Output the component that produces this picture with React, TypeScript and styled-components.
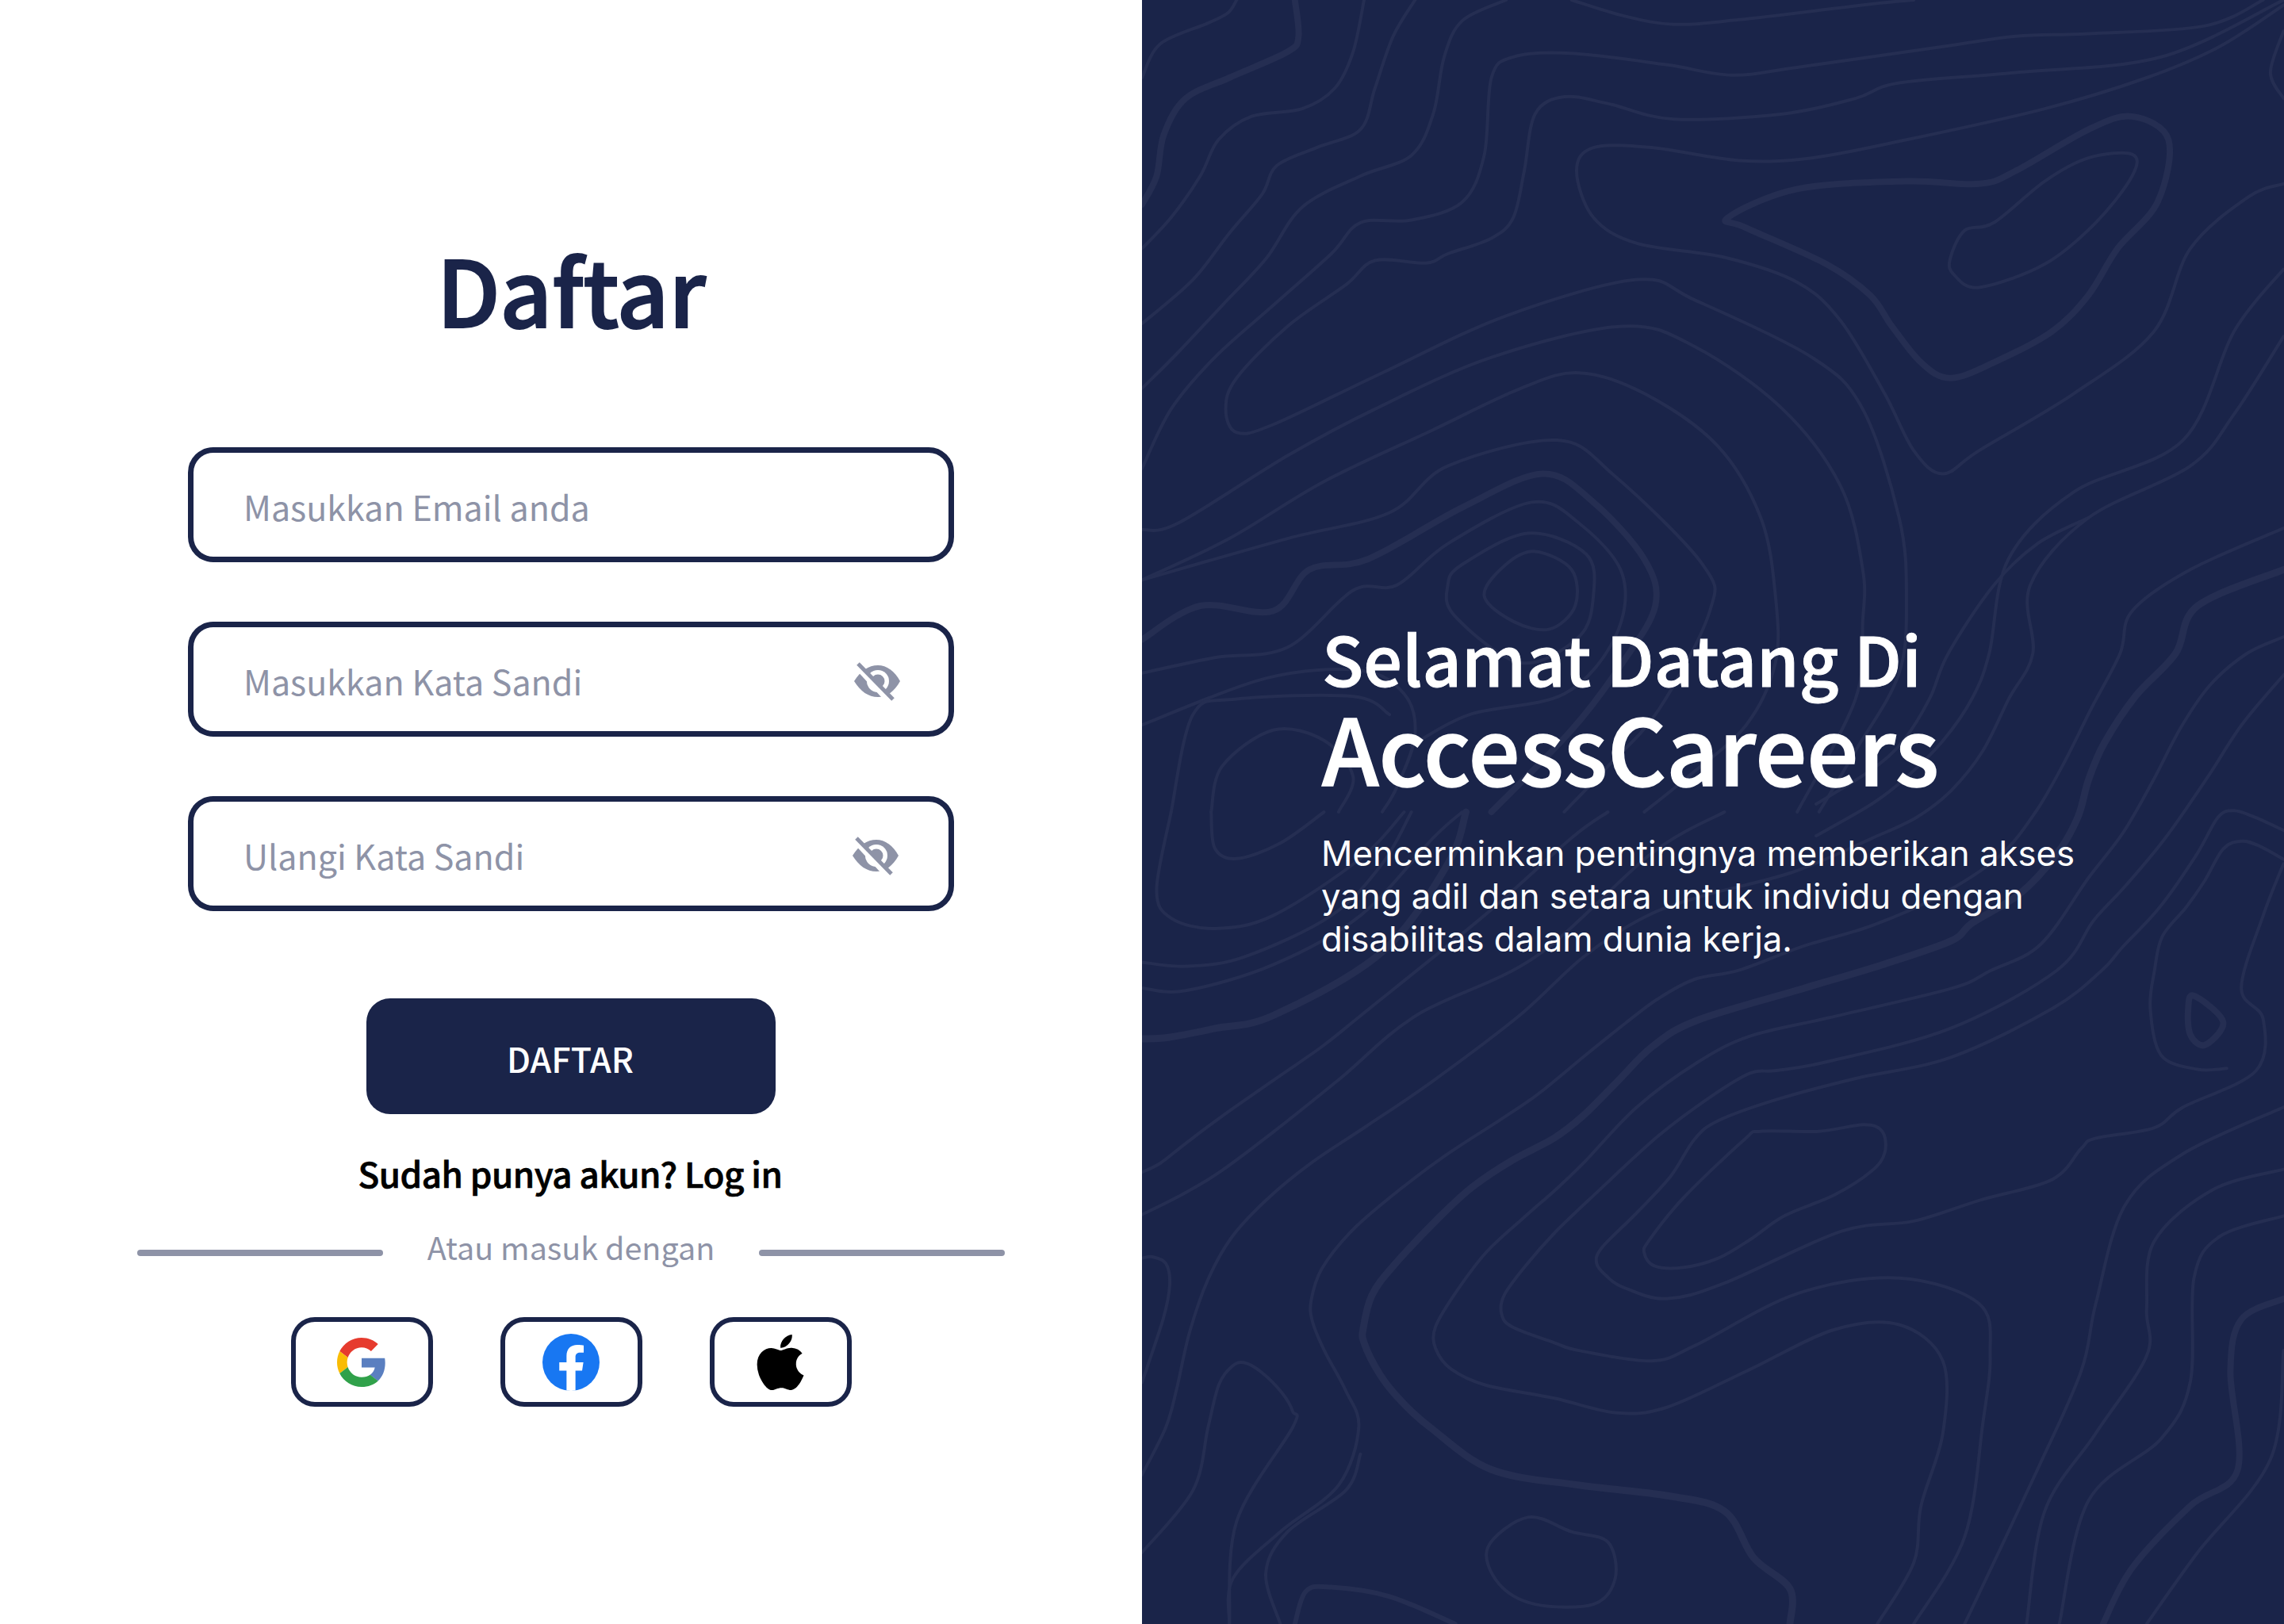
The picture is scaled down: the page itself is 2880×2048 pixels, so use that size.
import React from "react";
import styled, { createGlobalStyle } from "styled-components";
import { FaApple } from "react-icons/fa";

const NAVY = "#1A2449";
const GREY = "#8E93A7";
const SANS = `"Noto Sans CJK JP", "Noto Sans", sans-serif`;

const GlobalStyle = createGlobalStyle`
  html, body {
    margin: 0;
    padding: 0;
    background: #fff;
  }
`;

const Page = styled.div`
  display: grid;
  grid-template-columns: 1440px 1440px;
  width: 2880px;
  height: 2048px;
  overflow: hidden;
`;

const FormPanel = styled.main`
  display: flex;
  flex-direction: column;
  align-items: center;
  padding-top: 303px;
  background: #fff;
  font-family: ${SANS};
`;

const Title = styled.h1`
  margin: 0 0 141px;
  font-size: 115px;
  line-height: 120px;
  font-weight: 500;
  letter-spacing: -0.5px;
  -webkit-text-stroke: 2px ${NAVY};
  color: ${NAVY};
`;

const Fields = styled.div`
  display: flex;
  flex-direction: column;
  gap: 75px;
`;

const Field = styled.label`
  display: flex;
  align-items: center;
  box-sizing: border-box;
  width: 966px;
  height: 145px;
  padding: 0 0 0 63px;
  border: 7px solid ${NAVY};
  border-radius: 32px;
  background: #fff;
`;

const FieldInput = styled.input`
  flex: 1;
  min-width: 0;
  padding: 3px 0 0;
  border: 0;
  outline: 0;
  background: transparent;
  font-family: ${SANS};
  font-size: 43px;
  color: ${NAVY};

  &::placeholder {
    color: ${GREY};
    opacity: 1;
  }
`;

const EyeSlot = styled.span<{ $right: number }>`
  display: flex;
  margin: 6px ${({ $right }) => $right}px 0 0;
`;

const SubmitButton = styled.button`
  width: 516px;
  height: 146px;
  margin-top: 110px;
  padding: 3px 2px 0 0;
  border: 0;
  border-radius: 30px;
  background: ${NAVY};
  color: #fff;
  font-family: ${SANS};
  font-size: 43px;
  font-weight: 500;
`;

const LoginHint = styled.p`
  margin: 44px 2px 0 0;
  font-size: 44px;
  line-height: 60px;
  font-weight: 500;
  letter-spacing: -0.5px;
  -webkit-text-stroke: 0.7px #000;
  color: #000;
`;

const Divider = styled.div`
  display: flex;
  align-items: center;
  justify-content: space-between;
  width: 1094px;
  margin-top: 33px;
  font-size: 39.5px;
  line-height: 60px;
  color: ${GREY};
`;

const DividerLine = styled.span`
  width: 310px;
  height: 8px;
  margin-top: 16px;
  border-radius: 4px;
  background: ${GREY};
`;

const SocialRow = styled.div`
  display: flex;
  gap: 85px;
  margin-top: 59px;
`;

const SocialButton = styled.button`
  display: flex;
  align-items: center;
  justify-content: center;
  box-sizing: border-box;
  width: 179px;
  height: 113px;
  padding: 0;
  border: 6px solid ${NAVY};
  border-radius: 30px;
  background: #fff;
`;

const WelcomePanel = styled.aside`
  position: relative;
  display: flex;
  flex-direction: column;
  padding: 776px 0 0 227px;
  background: ${NAVY};
  overflow: hidden;
`;

const Contours = styled.svg`
  position: absolute;
  inset: 0;
  width: 1440px;
  height: 2048px;
  fill: none;
  stroke: #252E52;
  stroke-linecap: round;
  stroke-linejoin: round;
`;

const Greeting = styled.h2`
  position: relative;
  margin: 0;
  font-family: ${SANS};
  font-size: 86px;
  line-height: 105px;
  font-weight: 500;
  -webkit-text-stroke: 1px #fff;
  color: #fff;
`;

const Brand = styled.h2`
  position: relative;
  margin: 0;
  font-family: ${SANS};
  font-size: 115px;
  line-height: 120px;
  font-weight: 500;
  -webkit-text-stroke: 1.5px #fff;
  color: #fff;
`;

const Blurb = styled.p`
  position: relative;
  width: 1000px;
  margin: 49px 0 0 -1px;
  font-family: Inter, sans-serif;
  font-size: 43.7px;
  line-height: 54px;
  color: #fff;
`;

type Pt = [number, number];

// the contours were traced from crops of different scale, these bring them to panel pixels
const z5 = (pts: Pt[]): Pt[] => pts.map(([x, y]) => [x * 0.918, y * 0.653]);
const z6 = (pts: Pt[]): Pt[] => pts.map(([x, y]) => [x * 0.918, 1024 + y * 0.653]);
const lowerLeft = (pts: Pt[]): Pt[] => pts.map(([x, y]) => [x / 3, 1280 + y / 3]);
const lowerMid = (pts: Pt[]): Pt[] => pts.map(([x, y]) => [500 + x / 3, 1100 + y / 3]);
const rightMid = (pts: Pt[]): Pt[] => pts.map(([x, y]) => [920 + x / 3, 824 + y / 3]);

// catmull-rom through the traced points, so the contours stay round
const smooth = (pts: Pt[], closed = false): string => {
  const n = pts.length;
  const at = (i: number): Pt => (closed ? pts[(i + n) % n] : pts[Math.max(0, Math.min(n - 1, i))]);
  const f = (v: number) => v.toFixed(1);
  let d = `M${f(pts[0][0])} ${f(pts[0][1])}`;
  const segs = closed ? n : n - 1;
  for (let i = 0; i < segs; i++) {
    const [p0, p1, p2, p3] = [at(i - 1), at(i), at(i + 1), at(i + 2)];
    d += `C${f(p1[0] + (p2[0] - p0[0]) / 6)} ${f(p1[1] + (p2[1] - p0[1]) / 6)} ${f(p2[0] - (p3[0] - p1[0]) / 6)} ${f(p2[1] - (p3[1] - p1[1]) / 6)} ${f(p2[0])} ${f(p2[1])}`;
  }
  return closed ? d + "Z" : d;
};

type Contour = { w: number; pts: Pt[]; closed?: boolean };

const contours: Contour[] = [
  // upper half
  { w: 4, pts: z5([[0, 150], [25, 85], [90, 45], [118, 25], [130, 0]]) },
  { w: 8, pts: z5([[210, 0], [215, 70], [200, 100], [120, 150], [60, 190], [30, 260], [20, 340], [0, 395]]) },
  { w: 4, pts: z5([[305, 0], [290, 100], [265, 170], [220, 210], [150, 225], [105, 270], [80, 340], [40, 420], [0, 480]]) },
  { w: 4, pts: z5([[375, 0], [345, 70], [320, 170], [300, 250], [240, 285], [185, 320], [165, 375], [120, 450], [70, 540], [0, 625]]) },
  { w: 4, pts: z5([[500, 0], [440, 40], [415, 110], [400, 220], [370, 300], [300, 340], [220, 400], [170, 500], [110, 590], [50, 680], [0, 750]]) },
  { w: 4, pts: z5([[590, 0], [660, 30], [730, 47], [820, 38], [1000, 8], [1060, 0]]) },
  { w: 4, pts: z5([[1540, 0], [1460, 50], [1300, 65], [1200, 70], [1100, 90], [900, 130], [810, 145], [720, 125], [590, 103], [510, 110], [480, 150], [470, 300], [440, 390], [370, 425], [300, 430], [260, 490], [180, 590], [100, 690], [40, 790], [0, 905]]) },
  { w: 4, pts: z5([[1568, 0], [1400, 110], [1200, 140], [1040, 160], [980, 190], [880, 220], [730, 230], [640, 200], [580, 187], [540, 220], [525, 330], [510, 420], [480, 460], [420, 490], [390, 508], [320, 503], [280, 550], [200, 630], [130, 730], [115, 790], [130, 835], [180, 820], [330, 720], [500, 610], [680, 540], [760, 580], [920, 690], [990, 790], [1040, 1000], [1050, 1150], [1040, 1300], [980, 1450], [930, 1568]]) },
  { w: 4, pts: z5([[1568, 10], [1480, 90], [1380, 150], [1240, 210], [1050, 270], [920, 305], [820, 310], [700, 285], [620, 285], [597, 330], [620, 420], [680, 470], [800, 497], [900, 545], [960, 620], [1020, 760], [1060, 870], [1100, 915], [1150, 870], [1280, 760], [1390, 640], [1440, 480], [1520, 380], [1568, 355]]) },
  { w: 8, closed: true, pts: z5([[805, 420], [900, 365], [1050, 350], [1150, 355], [1200, 330], [1300, 250], [1360, 225], [1410, 270], [1395, 390], [1340, 480], [1300, 570], [1250, 640], [1170, 700], [1110, 730], [1070, 700], [1030, 630], [1000, 570], [940, 510], [830, 440]]) },
  { w: 4, closed: true, pts: z5([[1110, 500], [1130, 445], [1170, 430], [1240, 350], [1300, 305], [1360, 298], [1360, 340], [1310, 430], [1240, 510], [1150, 555], [1115, 530]]) },
  { w: 4, pts: z5([[0, 1023], [50, 1010], [200, 880], [320, 790], [480, 690], [660, 630], [760, 670], [880, 790], [960, 940], [990, 1100], [990, 1200], [980, 1350], [900, 1568]]) },
  { w: 4, pts: z5([[0, 1120], [120, 1040], [250, 930], [400, 830], [520, 750], [600, 720], [690, 760], [790, 860], [850, 1000], [870, 1150], [870, 1280], [830, 1400], [750, 1500], [690, 1568]]) },
  { w: 4, closed: true, pts: z5([[470, 1150], [500, 1090], [540, 1065], [590, 1100], [595, 1170], [560, 1215], [510, 1200]]) },
  { w: 4, closed: true, pts: z5([[420, 1130], [440, 1090], [530, 1030], [610, 1070], [620, 1150], [600, 1230], [520, 1280], [430, 1190]]) },
  { w: 4, pts: z5([[0, 1300], [100, 1270], [200, 1250], [290, 1140], [350, 1130], [420, 1050], [535, 970], [600, 1010], [660, 1110], [650, 1230], [580, 1340], [450, 1380], [370, 1440]]) },
  { w: 8, pts: z5([[0, 1235], [80, 1170], [180, 1180], [230, 1100], [310, 1080], [440, 980], [550, 915], [620, 970], [690, 1080], [705, 1170], [660, 1280], [590, 1410], [480, 1568]]) },
  { w: 4, pts: z5([[0, 1120], [200, 1040], [340, 990], [420, 900], [570, 850], [650, 920], [770, 1090], [780, 1180], [710, 1370], [640, 1480], [580, 1568]]) },
  { w: 4, pts: z5([[0, 1400], [170, 1310], [300, 1295], [360, 1340], [375, 1420], [350, 1520], [330, 1568]]) },
  { w: 4, pts: z5([[40, 1568], [70, 1380], [130, 1350], [290, 1345], [340, 1380]]) },
  { w: 4, pts: z5([[95, 1568], [110, 1480], [180, 1410], [250, 1430], [290, 1500], [270, 1568]]) },
  { w: 4, pts: z5([[1568, 60], [1550, 140], [1568, 190]]) },

  // right side, upper end behind the heading
  { w: 4, pts: [...z5([[1568, 520], [1500, 640], [1430, 850], [1280, 950], [1190, 1080]]), ...rightMid([[445, 0], [380, 170], [270, 330], [130, 470], [0, 570], [-210, 690]])] },
  { w: 4, pts: [...z5([[1300, 1000], [1230, 1050], [1170, 1130]]), ...rightMid([[290, 0], [220, 170], [120, 330], [0, 440], [-210, 570]])] },

  // lower half
  { w: 4, pts: z6([[40, 0], [20, 150], [40, 205], [100, 225], [180, 200], [300, 90], [360, 0]]) },
  { w: 4, pts: z6([[95, 0], [100, 70], [130, 90], [190, 60], [250, 0]]) },
  { w: 4, pts: z6([[0, 290], [60, 298], [140, 280], [260, 200], [330, 100], [370, 0]]) },
  { w: 4, pts: z6([[0, 340], [60, 345], [180, 295], [300, 200], [400, 50], [440, 0]]) },
  { w: 9, pts: [...lowerLeft([[0, 90], [100, 85], [280, 50], [500, 0]]), ...z6([[330, 270], [420, 100], [445, 0]])] },
  { w: 4, pts: [...lowerLeft([[0, 595], [70, 560], [160, 490], [300, 385], [500, 245], [680, 120], [830, 0]]), ...z6([[470, 200], [590, 50], [640, 0]])] },
  { w: 4, pts: [...lowerLeft([[0, 755], [150, 680], [300, 590], [500, 440], [750, 240], [1040, 0]]), ...z6([[540, 280], [700, 80], [800, 0]])] },
  // long line that runs from the bottom left up to the right edge
  { w: 4, pts: [...z6([[0, 1280]]), ...lowerLeft([[90, 1560], [130, 1420], [180, 1200], [250, 1000], [340, 840], [470, 700], [640, 560], [850, 420], [1100, 250], [1430, 0]]), ...lowerMid([[170, 320], [400, 170], [620, 90], [960, 0]]), ...rightMid([[0, 700], [170, 620], [300, 520], [420, 370], [520, 170], [610, 0]]), ...z5([[1220, 1130], [1300, 1000], [1440, 900], [1500, 800], [1568, 650]])] },
  { w: 4, pts: [...z6([[120, 1568], [125, 1480], [190, 1390], [270, 1300]]), ...lowerLeft([[820, 1560], [770, 1420], [690, 1270], [645, 1160], [640, 1080], [680, 960], [790, 820], [950, 680], [1150, 530], [1350, 400], [1470, 320], [1560, 250]]), ...lowerMid([[180, 690], [330, 570], [450, 480], [590, 405], [760, 370], [1000, 280]]), ...rightMid([[0, 1030], [250, 920], [480, 770], [620, 600], [730, 410], [830, 210], [940, 0]]), ...z5([[1360, 1180], [1440, 1100], [1568, 1020]])] },
  { w: 9, pts: [...z6([[890, 1568], [890, 1500], [840, 1440], [800, 1350], [720, 1320], [600, 1300], [480, 1270]]), ...lowerLeft([[1090, 1560], [980, 1460], [900, 1360], [840, 1240], [838, 1180], [870, 1060], [950, 950], [1130, 760], [1250, 650], [1400, 550], [1560, 465]]), ...lowerMid([[170, 920], [300, 790], [430, 660], [600, 560], [1000, 440], [1300, 350], [1560, 260]]), ...rightMid([[380, 1020], [560, 910], [700, 760], [780, 620], [820, 480], [880, 340], [1000, 160], [1150, 0]]), ...z5([[1450, 1170], [1568, 1100]])] },
  { w: 4, pts: [...z6([[1010, 1568], [1060, 1450], [1070, 1340], [1100, 1200], [1100, 1060], [1040, 990], [950, 1000], [830, 1080], [720, 1150], [650, 1160]]), ...lowerLeft([[1560, 1450], [1300, 1400], [1170, 1340], [1110, 1260], [1110, 1180], [1180, 1060], [1300, 900], [1440, 770], [1560, 665]]), ...lowerMid([[170, 1100], [370, 890], [600, 720], [800, 620], [1100, 550], [1560, 440]]), ...rightMid([[450, 1200], [640, 1100], [820, 850], [950, 680], [1060, 490], [1170, 280], [1280, 120], [1420, 0]]), ...z5([[1568, 1230]])] },
  { w: 4, pts: [...z6([[1060, 1568], [1130, 1400], [1155, 1180], [1165, 1050], [1150, 950], [1040, 900], [900, 930], [760, 1030], [700, 1060], [600, 1040]]), ...lowerLeft([[1560, 1240], [1400, 1180], [1360, 1130], [1370, 1060], [1450, 950], [1560, 825]]), ...lowerMid([[190, 1240], [450, 1000], [650, 850], [800, 760], [900, 750], [1100, 715], [1560, 590]]), ...rightMid([[700, 1200], [840, 1010], [960, 880], [1110, 700], [1270, 470], [1400, 270], [1560, 80]])] },
  { w: 4, closed: true, pts: lowerMid([[400, 1440], [420, 1390], [550, 1230], [780, 1010], [840, 980], [1060, 980], [1230, 955], [1300, 980], [1310, 1060], [1260, 1130], [1120, 1220], [930, 1300], [800, 1390], [680, 1460], [550, 1495], [440, 1490]]) },
  { w: 4, pts: [...rightMid([[1560, 670], [1450, 620], [1370, 595], [1310, 620], [1230, 760], [1090, 960], [950, 1110], [870, 1200]]), ...z6([[1250, 380]]), ...lowerMid([[1560, 700], [1200, 780], [900, 860], [680, 940], [590, 1010], [500, 1150], [370, 1290], [240, 1420], [220, 1480], [260, 1530], [320, 1570]]), ...z6([[720, 940], [800, 910], [960, 810], [1060, 790], [1150, 750], [1250, 710], [1290, 650], [1310, 630], [1390, 610], [1430, 570], [1530, 500], [1540, 400], [1510, 340], [1540, 200], [1568, 100]])] },
  { w: 4, pts: [...rightMid([[1560, 780], [1470, 730], [1400, 710], [1330, 740], [1260, 860], [1190, 960], [1100, 1070], [1070, 1200]]), ...z6([[1385, 380], [1400, 470], [1450, 497], [1490, 495]])] },
  { w: 8, closed: true, pts: z6([[1445, 355], [1485, 405], [1460, 450], [1440, 430], [1437, 380]]) },
  { w: 4, pts: z6([[1568, 570], [1430, 660], [1350, 760], [1310, 950], [1290, 1080], [1230, 1270], [1130, 1568]]) },
  { w: 4, pts: z6([[1568, 690], [1470, 730], [1390, 830], [1380, 960], [1380, 1050], [1310, 1200], [1240, 1350], [1215, 1568]]) },
  { w: 4, pts: z6([[1568, 780], [1480, 820], [1445, 900], [1440, 1100], [1400, 1210], [1300, 1330], [1260, 1568]]) },
  { w: 8, pts: z6([[1568, 940], [1510, 980], [1495, 1080], [1505, 1270], [1440, 1340], [1360, 1460], [1320, 1568]]) },
  { w: 4, pts: z6([[1568, 1040], [1550, 1250], [1450, 1430], [1380, 1568]]) },
  { w: 4, pts: lowerLeft([[0, 920], [40, 915], [90, 940], [105, 1020], [80, 1150], [0, 1390]]) },
  { w: 4, pts: [...z6([[0, 1430], [70, 1310]]), ...lowerLeft([[250, 1560], [290, 1400], [340, 1330], [385, 1315], [450, 1350], [530, 1430], [570, 1500], [570, 1560]]), ...z6([[130, 1370], [120, 1568]])] },
  { w: 4, pts: z6([[190, 1568], [170, 1470], [200, 1390], [280, 1310], [300, 1240]]) },
  { w: 6, pts: z6([[210, 1568], [225, 1505], [260, 1497], [340, 1515], [430, 1568]]) },
  { w: 4, closed: true, pts: z6([[475, 1420], [530, 1362], [590, 1390], [640, 1410], [650, 1480], [620, 1530], [540, 1530], [490, 1490]]) },
];

const EyeOff = () => (
  <svg width="58" height="50" viewBox="0 0 58 50">
    <path d="M0 24C8 11 18 4 30 4c11 0 21 7 28 20-7 13-17 20-28 20C18 44 8 37 0 24z" fill={GREY} />
    <circle cx="30" cy="24" r="14" fill="#fff" />
    <circle cx="30" cy="24" r="8.5" fill={GREY} />
    <path d="M7 8 44 48" stroke="#fff" strokeWidth="9" />
    <path d="M5 2 49 47" stroke={GREY} strokeWidth="5" />
  </svg>
);

const GoogleIcon = () => (
  <svg width="62" height="62" viewBox="0 0 48 48">
    <path fill="#E63B2E" d="M24 9.5c3.54 0 6.71 1.22 9.21 3.6l6.85-6.85C35.9 2.38 30.47 0 24 0 14.62 0 6.51 5.38 2.56 13.22l7.98 6.19C12.43 13.72 17.74 9.5 24 9.5z" />
    <path fill="#5A7FC0" d="M46.98 24.55c0-1.57-.15-3.09-.38-4.55H24v9.02h12.94c-.58 2.96-2.26 5.48-4.78 7.18l7.73 6c4.51-4.18 7.09-10.36 7.09-17.65z" />
    <path fill="#F9BC05" d="M10.53 28.59c-.48-1.45-.76-2.99-.76-4.59s.27-3.14.76-4.59l-7.98-6.19C.92 16.46 0 20.12 0 24c0 3.88.92 7.54 2.56 10.78l7.97-6.19z" />
    <path fill="#30A14A" d="M24 48c6.48 0 11.93-2.13 16.04-5.81l-7.73-6c-2.15 1.45-4.92 2.3-8.31 2.3-6.26 0-11.57-4.22-13.47-9.91l-7.98 6.19C6.51 42.62 14.62 48 24 48z" />
  </svg>
);

const FacebookIcon = () => (
  <svg width="72" height="72" viewBox="0 0 24 24">
    <circle cx="12" cy="12" r="12" fill="#1877F2" />
    <path fill="#fff" d="M16.671 15.469 17.203 12h-3.328V9.749c0-.949.465-1.874 1.956-1.874h1.513V4.922s-1.374-.234-2.686-.234c-2.741 0-4.533 1.66-4.533 4.668V12H7.078v3.469h3.047v8.385a12.1 12.1 0 0 0 3.75 0v-8.385z" />
  </svg>
);

export default function App() {
  return (
    <Page>
      <GlobalStyle />
      <FormPanel>
        <Title>Daftar</Title>
        <Fields>
          <Field>
            <FieldInput placeholder="Masukkan Email anda" />
          </Field>
          <Field>
            <FieldInput type="password" placeholder="Masukkan Kata Sandi" />
            <EyeSlot $right={61}><EyeOff /></EyeSlot>
          </Field>
          <Field>
            <FieldInput type="password" placeholder="Ulangi Kata Sandi" />
            <EyeSlot $right={63}><EyeOff /></EyeSlot>
          </Field>
        </Fields>
        <SubmitButton>DAFTAR</SubmitButton>
        <LoginHint>Sudah punya akun? Log in</LoginHint>
        <Divider>
          <DividerLine />
          <span>Atau masuk dengan</span>
          <DividerLine />
        </Divider>
        <SocialRow>
          <SocialButton aria-label="Google"><GoogleIcon /></SocialButton>
          <SocialButton aria-label="Facebook"><FacebookIcon /></SocialButton>
          <SocialButton aria-label="Apple"><FaApple size={80} color="#000" /></SocialButton>
        </SocialRow>
      </FormPanel>
      <WelcomePanel>
        <Contours viewBox="0 0 1440 2048">
          {contours.map((c, i) => (
            <path key={i} d={smooth(c.pts, c.closed)} strokeWidth={c.w} />
          ))}
        </Contours>
        <Greeting>Selamat Datang Di</Greeting>
        <Brand>AccessCareers</Brand>
        <Blurb>
          Mencerminkan pentingnya memberikan akses
          <br />
          yang adil dan setara untuk individu dengan
          <br />
          disabilitas dalam dunia kerja.
        </Blurb>
      </WelcomePanel>
    </Page>
  );
}
